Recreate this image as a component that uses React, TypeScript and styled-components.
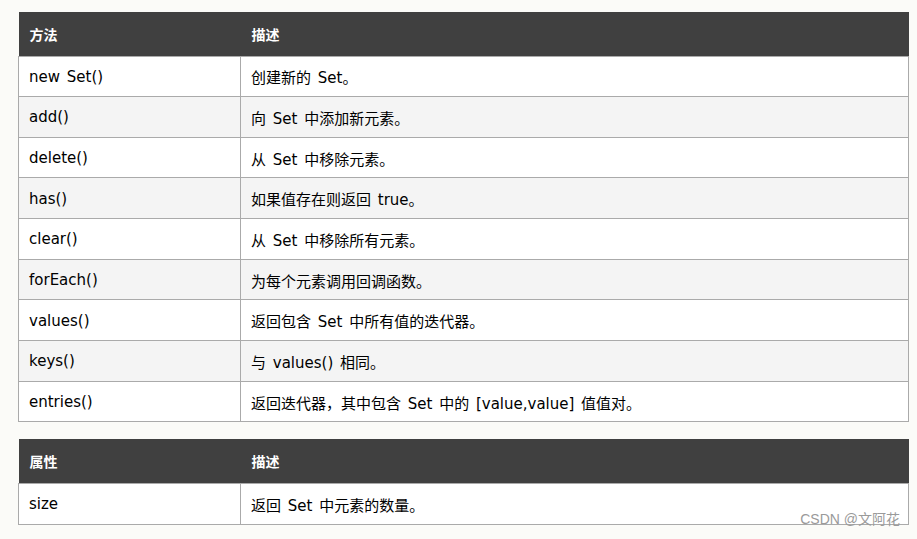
import * as React from "react";
import styled, { createGlobalStyle } from "styled-components";

const GlobalStyle = createGlobalStyle`
  html, body {
    margin: 0;
    padding: 0;
    background: #fbfbf8;
  }
`;

const SPage = styled.div`
  position: relative;
  padding: 12px 8px 16px 18px;
  width: 891px;
  font-family: "DejaVu Sans", Verdana, "Noto Sans CJK SC", sans-serif;
  font-size: 15px;
  word-spacing: 2px;
  color: #000;
`;

const STable = styled.table`
  width: 891px;
  border-collapse: collapse;
  table-layout: fixed;

  & + & {
    margin-top: 17px;
  }
`;

const SHeadCell = styled.th`
  background: #404040;
  color: #fff;
  font-size: 14px;
  font-weight: bold;
  text-align: left;
  height: 44px;
  padding: 0 11px;
  box-sizing: border-box;
  vertical-align: middle;
`;

const SRow = styled.tr<{ $alt: boolean }>`
  background: ${(p) => (p.$alt ? "#f4f4f4" : "#ffffff")};
  height: 40.67px;
`;

const SCell = styled.td`
  border: 1px solid #aaaaaa;
  padding: 1px 10px 0;
  vertical-align: middle;
  white-space: nowrap;
`;

const SWatermark = styled.div`
  position: absolute;
  z-index: 1;
  right: 17px;
  top: 511px;
  font-family: "Liberation Sans", Arial, "Noto Sans CJK SC", sans-serif;
  font-size: 14px;
  line-height: 16px;
  word-spacing: 0;
  color: #9a9a9a;
`;

const methods: [string, string][] = [
  ["new Set()", "创建新的 Set。"],
  ["add()", "向 Set 中添加新元素。"],
  ["delete()", "从 Set 中移除元素。"],
  ["has()", "如果值存在则返回 true。"],
  ["clear()", "从 Set 中移除所有元素。"],
  ["forEach()", "为每个元素调用回调函数。"],
  ["values()", "返回包含 Set 中所有值的迭代器。"],
  ["keys()", "与 values() 相同。"],
  ["entries()", "返回迭代器，其中包含 Set 中的 [value,value] 值值对。"],
];

const props: [string, string][] = [["size", "返回 Set 中元素的数量。"]];

const RefTable = ({ head, rows }: { head: [string, string]; rows: [string, string][] }) => (
  <STable>
    <colgroup>
      <col style={{ width: 222 }} />
      <col />
    </colgroup>
    <thead>
      <tr>
        <SHeadCell>{head[0]}</SHeadCell>
        <SHeadCell>{head[1]}</SHeadCell>
      </tr>
    </thead>
    <tbody>
      {rows.map(([name, desc], i) => (
        <SRow key={name} $alt={i % 2 === 1}>
          <SCell>{name}</SCell>
          <SCell>{desc}</SCell>
        </SRow>
      ))}
    </tbody>
  </STable>
);

const App = () => (
  <>
    <GlobalStyle />
    <SPage>
      <RefTable head={["方法", "描述"]} rows={methods} />
      <RefTable head={["属性", "描述"]} rows={props} />
      <SWatermark>CSDN @文阿花</SWatermark>
    </SPage>
  </>
);

export default App;
